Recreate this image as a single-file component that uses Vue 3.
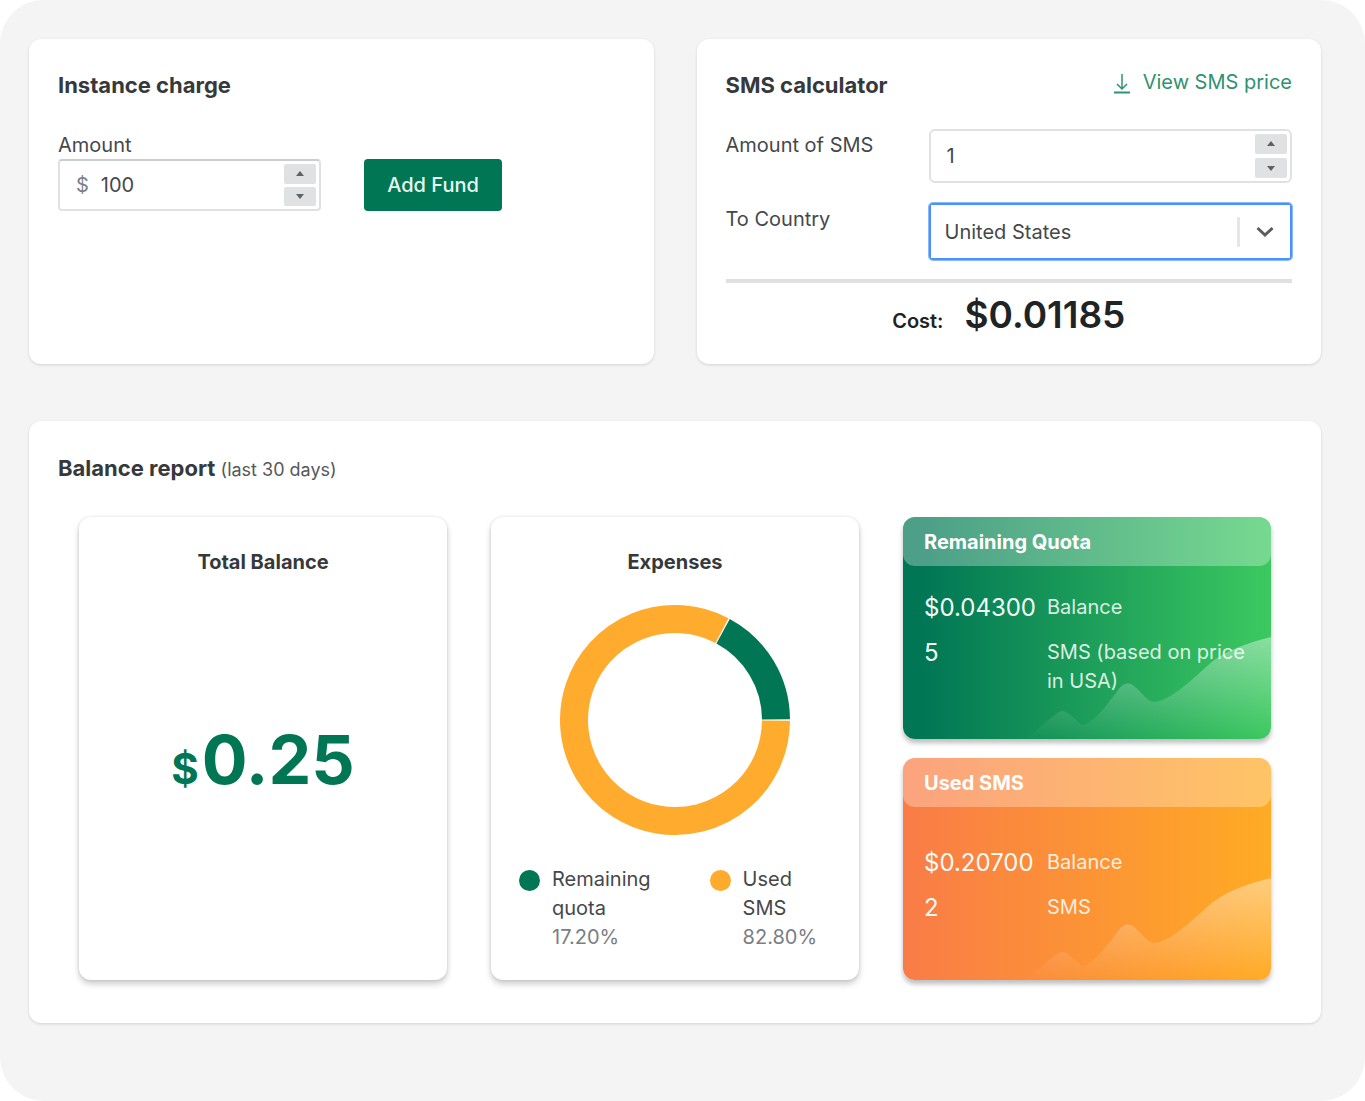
<script setup>
import { ref } from 'vue'

const fund = ref(100)
const smsCount = ref(1)
const country = ref('United States')

const RADIUS = 101
const CENTER = 116

// Angles are in turns, clockwise from three o'clock
function arc(from, to) {
  const point = (turn) => {
    const a = turn * 2 * Math.PI
    return `${CENTER + RADIUS * Math.cos(a)} ${CENTER + RADIUS * Math.sin(a)}`
  }
  const large = to - from > 0.5 ? 1 : 0
  return `M${point(from)} A${RADIUS} ${RADIUS} 0 ${large} 1 ${point(to)}`
}

const slices = [
  { label: 'Used SMS', color: '#ffab2d', path: arc(0.001, 0.827) },
  { label: 'Remaining quota', color: '#007654', path: arc(0.829, 0.999) },
]

const legend = [
  { label: 'Remaining quota', value: '17.20%', kind: 'green' },
  { label: 'Used SMS', value: '82.80%', kind: 'orange' },
]

const quotas = [
  {
    title: 'Remaining Quota',
    kind: 'green',
    rows: [
      { value: '$0.04300', label: 'Balance' },
      { value: '5', label: 'SMS (based on price in USA)' },
    ],
  },
  {
    title: 'Used SMS',
    kind: 'orange',
    rows: [
      { value: '$0.20700', label: 'Balance' },
      { value: '2', label: 'SMS' },
    ],
  },
]
</script>

<template>
  <main class="shell">
    <div class="top">
      <section class="card">
        <h2>Instance charge</h2>
        <form class="charge" @submit.prevent>
          <div class="charge-field">
            <label for="fund">Amount</label>
            <div class="number">
              <span class="prefix">$</span>
              <input id="fund" v-model="fund" type="number" />
              <span class="steps">
                <button type="button" aria-label="Increase amount" @click="fund++">
                  <svg viewBox="0 0 8 6"><path d="M4 0 L8 5 H0 Z" /></svg>
                </button>
                <button type="button" aria-label="Decrease amount" @click="fund--">
                  <svg viewBox="0 0 8 6"><path d="M4 6 L8 1 H0 Z" /></svg>
                </button>
              </span>
            </div>
          </div>
          <button class="add" type="submit">Add Fund</button>
        </form>
      </section>

      <section class="card">
        <header class="card-head">
          <h2>SMS calculator</h2>
          <a href="#price" class="price">
            <svg viewBox="0 0 16 20" fill="none" stroke="currentColor" stroke-width="1.5">
              <path d="M8 0 V15 M3 10 L8 15 L13 10" />
              <path d="M0 18.5 H16" stroke-width="2" />
            </svg>
            <span>View SMS price</span>
          </a>
        </header>
        <div class="row">
          <label for="count">Amount of SMS</label>
          <div class="number tall">
            <input id="count" v-model="smsCount" type="number" />
            <span class="steps">
              <button type="button" aria-label="Increase SMS" @click="smsCount++">
                <svg viewBox="0 0 8 6"><path d="M4 0 L8 5 H0 Z" /></svg>
              </button>
              <button type="button" aria-label="Decrease SMS" @click="smsCount--">
                <svg viewBox="0 0 8 6"><path d="M4 6 L8 1 H0 Z" /></svg>
              </button>
            </span>
          </div>
        </div>
        <div class="row">
          <label for="country">To Country</label>
          <div class="country">
            <select id="country" v-model="country">
              <option>United States</option>
            </select>
            <span class="chevron">
              <svg viewBox="0 0 18 12" fill="none" stroke="#5a5d60" stroke-width="3">
                <path d="M1.5 2 L9 9 L16.5 2" />
              </svg>
            </span>
          </div>
        </div>
        <p class="cost"><span>Cost:</span><strong>$0.01185</strong></p>
      </section>
    </div>

    <section class="card report">
      <h2>Balance report <small>(last 30 days)</small></h2>
      <div class="panels">
        <article class="panel">
          <h3>Total Balance</h3>
          <p class="total"><span>$</span>0.25</p>
        </article>

        <article class="panel">
          <h3>Expenses</h3>
          <svg class="donut" viewBox="0 0 232 232" role="img" aria-label="Expenses chart">
            <path
              v-for="s in slices"
              :key="s.label"
              :d="s.path"
              :stroke="s.color"
              fill="none"
              stroke-width="28"
            />
          </svg>
          <ul class="legend">
            <li v-for="l in legend" :key="l.label">
              <i :class="l.kind"></i>
              <div>
                <span class="legend-label">{{ l.label }}</span>
                <span class="legend-value">{{ l.value }}</span>
              </div>
            </li>
          </ul>
        </article>

        <div class="quotas">
          <article v-for="q in quotas" :key="q.title" class="quota" :class="q.kind">
            <svg class="wave" viewBox="0 0 245 102">
              <defs>
                <linearGradient :id="`wave-${q.kind}`" x1="0" y1="0" x2="0" y2="1">
                  <stop offset="0" stop-color="#fff" stop-opacity="0.4" />
                  <stop offset="1" stop-color="#fff" stop-opacity="0" />
                </linearGradient>
              </defs>
              <path
                :fill="`url(#wave-${q.kind})`"
                d="M0 102 C14 90 26 79 33 75 Q38 72 43 77 C50 82 54 88 58 88 C66 86 80 70 92 53 Q100 42 108 49 C117 56 121 65 129 65 C142 64 163 46 180 30 C198 13 222 6 245 0 V102 Z"
              />
            </svg>
            <h3>{{ q.title }}</h3>
            <dl>
              <div v-for="r in q.rows" :key="r.label">
                <dt>{{ r.label }}</dt>
                <dd>{{ r.value }}</dd>
              </div>
            </dl>
          </article>
        </div>
      </div>
    </section>
  </main>
</template>

<style>
body {
  margin: 0;
  background: #fff;
}
</style>

<style scoped>
* {
  box-sizing: border-box;
}

.shell {
  padding: 39px 44px 78px 29px;
  border-radius: 44px;
  background: #f4f4f4;
  color: #45484b;
  font: 20px/28px Inter, 'Liberation Sans', sans-serif;
}

h2,
h3,
p,
ul,
dl,
dd {
  margin: 0;
  padding: 0;
}

button,
input,
select {
  font: inherit;
  color: inherit;
}

h2 {
  color: #36393c;
  font-size: 22px;
  line-height: 32px;
  font-weight: 700;
}

h3 {
  color: #36393c;
  font-size: 20px;
  line-height: 28px;
  font-weight: 700;
}

.card {
  padding: 30px 29px 23px;
  border-radius: 12px;
  background: #fff;
  box-shadow: 0 1px 3px rgba(0, 0, 0, 0.14);
}

.top {
  display: grid;
  grid-template-columns: repeat(2, minmax(0, 1fr));
  gap: 43px;
  margin-bottom: 57px;
}

.charge {
  display: flex;
  align-items: flex-end;
  gap: 43px;
  margin-top: 30px;
}

.charge-field {
  width: 263px;
}

.charge-field label {
  display: block;
}

.number {
  display: flex;
  align-items: center;
  height: 52px;
  padding: 3px 3px 3px 16px;
  border: 2px solid #dfe1e3;
  border-top-color: #c9cdd0;
  border-radius: 4px;
}

.number.tall {
  height: 54px;
  border-color: #dfe1e3;
  border-radius: 6px;
}

.prefix {
  margin-right: 12px;
  color: #7c8084;
}

.number input {
  flex: 1;
  min-width: 0;
  padding: 0;
  border: 0;
  outline: 0;
  background: none;
  appearance: textfield;
}

.number input::-webkit-inner-spin-button {
  appearance: none;
}

.steps {
  display: flex;
  flex-direction: column;
  align-self: stretch;
  gap: 3px;
  width: 32px;
}

.tall .steps {
  gap: 4px;
}

.steps button {
  display: flex;
  flex: 1;
  align-items: center;
  justify-content: center;
  padding: 0;
  border: 0;
  border-radius: 2px;
  background: #e0e1e2;
}

.steps svg {
  width: 8px;
  height: 6px;
  fill: #5f6265;
}

.add {
  width: 138px;
  height: 52px;
  padding: 0;
  border: 0;
  border-radius: 4px;
  background: #007654;
  color: #e8f4f0;
  font-weight: 500;
}

.card-head {
  display: flex;
  justify-content: space-between;
  align-items: flex-start;
}

.price {
  display: flex;
  align-items: center;
  gap: 13px;
  color: #2f9270;
  line-height: 26px;
  text-decoration: none;
}

.price svg {
  width: 16px;
  height: 20px;
  margin-top: 4px;
}

.row {
  display: grid;
  grid-template-columns: 203px minmax(0, 1fr);
  margin-top: 20px;
}

.card-head + .row {
  margin-top: 28px;
}

.row label {
  padding-top: 2px;
}

.country {
  display: grid;
  align-items: center;
  height: 57px;
  border: 2px solid #4a90ff;
  border-radius: 4px;
  box-shadow: 0 0 0 1px #8ab8ff;
}

.country select,
.chevron {
  grid-area: 1 / 1;
}

.country select {
  width: 100%;
  height: 100%;
  padding: 0 70px 0 14px;
  border: 0;
  outline: 0;
  background: #fff;
  appearance: none;
}

.chevron {
  display: flex;
  align-items: center;
  justify-self: end;
  height: 30px;
  padding: 0 16px;
  border-left: 3px solid #e6e6e6;
  pointer-events: none;
}

.chevron svg {
  width: 18px;
  height: 12px;
}

.cost {
  display: flex;
  align-items: baseline;
  justify-content: center;
  gap: 21px;
  margin-top: 19px;
  padding-top: 12px;
  border-top: 4px solid #e0e0e0;
  color: #202224;
  line-height: 40px;
  font-weight: 600;
}

.cost strong {
  font-size: 37px;
  font-weight: 600;
}

.report {
  padding-top: 31px;
  padding-bottom: 43px;
}

h2 small {
  color: #55585b;
  font-size: 18px;
  font-weight: 400;
}

.panels {
  display: grid;
  grid-template-columns: repeat(3, minmax(0, 1fr));
  gap: 44px;
  margin: 31px 21px 0;
}

.panel {
  display: flex;
  flex-direction: column;
  align-items: center;
  padding: 31px 28px 28px;
  border-radius: 12px;
  box-shadow: 0 4px 6px rgba(0, 0, 0, 0.2), 0 0 3px rgba(0, 0, 0, 0.12);
}

.total {
  margin: auto;
  color: #007654;
  font-size: 68px;
  line-height: 80px;
  font-weight: 700;
}

.total span {
  margin-right: 3px;
  font-size: 42px;
}

.donut {
  width: 232px;
  height: 232px;
  margin-top: 28px;
}

.legend {
  display: flex;
  gap: 59px;
  width: 100%;
  margin-top: 29px;
  list-style: none;
}

.legend li {
  display: flex;
  gap: 12px;
}

.legend i {
  flex: none;
  width: 21px;
  height: 21px;
  margin-top: 5px;
  border-radius: 50%;
}

.legend span {
  display: block;
  line-height: 29px;
}

.legend-label {
  width: min-content;
}

.legend-value {
  color: #7b7e81;
}

i.green {
  background: #007654;
}

i.orange {
  background: #ffab2d;
}

.quotas {
  display: grid;
  grid-template-rows: 1fr 1fr;
  gap: 19px;
}

.quota {
  position: relative;
  display: flex;
  flex-direction: column;
  border-radius: 12px;
  box-shadow: 0 4px 5px rgba(0, 0, 0, 0.26);
  color: rgba(255, 255, 255, 0.85);
}

.quota.green {
  background: linear-gradient(90deg, #007654 5%, #3cc960);
}

.quota.orange {
  background: linear-gradient(90deg, #f97c47, #ffab24);
}

.wave {
  position: absolute;
  right: 0;
  bottom: 0;
  width: 245px;
  height: 102px;
  border-bottom-right-radius: 12px;
}

.quota h3 {
  position: relative;
  padding: 11px 21px 10px;
  border-radius: 12px;
  background: rgba(255, 255, 255, 0.3);
  color: #fff;
}

.quota dl {
  position: relative;
  display: flex;
  flex: 1;
  flex-direction: column;
  justify-content: center;
  gap: 16px;
  padding: 0 21px 17px;
}

.quota dl div {
  display: grid;
  grid-template-columns: 123px 1fr;
}

.quota dt,
.quota dd {
  grid-row: 1;
  line-height: 29px;
}

.quota dt {
  grid-column: 2;
}

.quota dd {
  grid-column: 1;
  color: #f4fbf6;
  font-size: 24px;
}
</style>
